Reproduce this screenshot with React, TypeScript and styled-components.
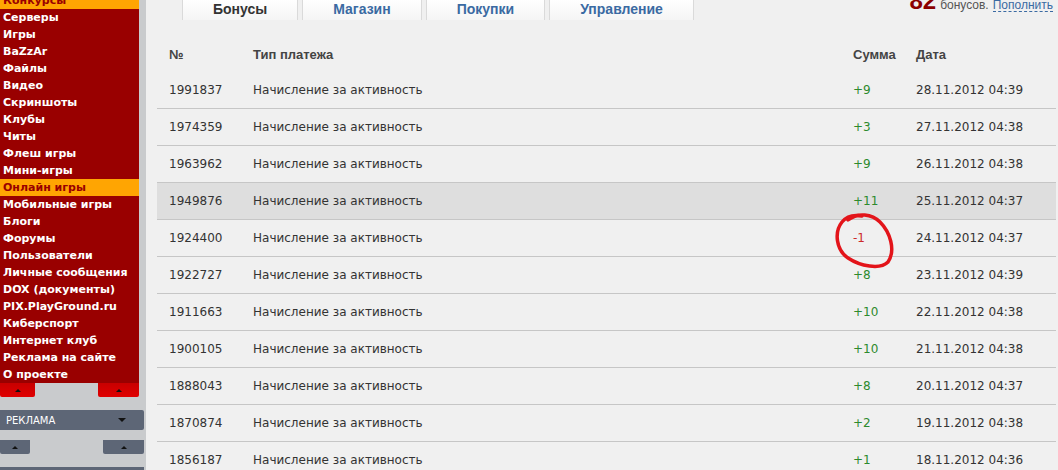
import styled, { createGlobalStyle } from "styled-components";

const Global = createGlobalStyle`
    html, body {
        margin: 0;
        padding: 0;
        background: #f0f0f0;
        overflow: hidden;
    }
`;

const Page = styled.div`
    display: flex;
    width: 1058px;
    height: 470px;
    overflow: hidden;
`;

const Sidebar = styled.aside`
    width: 146px;
    flex: none;
    background: #c9cbcd;
    display: flex;
    flex-direction: column;
    > * {
        flex: none;
    }
`;

const Menu = styled.ul`
    list-style: none;
    margin: -8px 0 0;
    padding: 0;
    width: 139px;
    background: #990000;
`;

const MenuItem = styled.li<{ $act?: boolean }>`
    height: 17px;
    line-height: 17px;
    padding-left: 3px;
    font-family: "DejaVu Sans", Verdana, sans-serif;
    font-size: 11px;
    font-weight: bold;
    white-space: nowrap;
    color: ${p => p.$act ? "#990000" : "#fff"};
    background: ${p => p.$act ? "#ffa502" : "transparent"};
`;

const ArrowRow = styled.div`
    display: flex;
    justify-content: space-between;
    width: 139px;
    height: 14px;
`;

const RedTab = styled.div<{ $w: number }>`
    width: ${p => p.$w}px;
    height: 100%;
    background: linear-gradient(#c80000, #e00000);
    border-radius: 0 0 2px 2px;
    display: flex;
    align-items: center;
    justify-content: center;
`;

const Up = styled.span`
    width: 0;
    height: 0;
    border-left: 3px solid transparent;
    border-right: 3px solid transparent;
    border-bottom: 3px solid #111;
`;

const Down = styled.span`
    width: 0;
    height: 0;
    border-left: 4px solid transparent;
    border-right: 4px solid transparent;
    border-top: 4px solid #111;
`;

const AdBar = styled.div`
    margin-top: 13px;
    width: 144px;
    height: 20px;
    background: #5d6676;
    border-radius: 0 2px 2px 0;
    display: flex;
    align-items: center;
    justify-content: space-between;
    padding: 0 18px 0 6px;
    box-sizing: border-box;
    font-family: "DejaVu Sans", Verdana, sans-serif;
    font-size: 10px;
    color: #fff;
`;

const SlateRow = styled.div`
    margin-top: 10px;
    width: 144px;
    height: 14px;
    display: flex;
    justify-content: space-between;
`;

const SlateTab = styled.div<{ $w: number }>`
    width: ${p => p.$w}px;
    height: 100%;
    background: #5d6676;
    border-radius: 0 0 2px 2px;
    display: flex;
    align-items: center;
    justify-content: center;
`;

const NextBar = styled.div`
    margin-top: 13px;
    width: 144px;
    height: 20px;
    background: #5d6676;
`;

const Content = styled.main`
    flex: 1;
    padding-left: 11px;
    display: flex;
    flex-direction: column;
`;

const TopBar = styled.div`
    display: flex;
    justify-content: space-between;
    align-items: flex-start;
    height: 20px;
    padding: 0 5px 0 25px;
`;

const Tabs = styled.nav`
    display: flex;
    gap: 4px;
`;

const Tab = styled.div<{ $act?: boolean }>`
    height: 20px;
    padding: 0 30px;
    border: 1px solid #dadada;
    border-top: none;
    border-bottom: none;
    background: linear-gradient(#ffffff, #f5f5f5);
    font-family: "Liberation Sans", Arial, sans-serif;
    font-size: 14px;
    font-weight: bold;
    line-height: 18px;
    color: ${p => p.$act ? "#333" : "#3a6aa2"};
`;

const Balance = styled.div`
    display: flex;
    align-items: baseline;
    gap: 4px;
    margin-top: -11px;
    line-height: 1;
    font-family: "Liberation Sans", Arial, sans-serif;
    font-size: 12px;
    color: #555;
`;

const Amount = styled.b`
    font-size: 24px;
    color: #8b0000;
`;

const Refill = styled.span`
    color: #3a6aa2;
    border-bottom: 1px dashed #3a6aa2;
`;

const Table = styled.div`
    margin-top: 16px;
    width: 899px;
    font-family: "DejaVu Sans", Verdana, sans-serif;
    font-size: 12px;
    color: #333;
`;

const Row = styled.div<{ $head?: boolean; $hover?: boolean }>`
    display: grid;
    grid-template-columns: 96px 600px 63px 140px;
    height: 36px;
    border-bottom: ${p => p.$head ? "none" : "1px solid #c6c6c6"};
    background: ${p => p.$hover ? "#dedede" : "transparent"};
    ${p => p.$head && `
        font-family: "Liberation Sans", Arial, sans-serif;
        font-size: 13px;
        font-weight: bold;
        color: #444;
    `}
`;

const Cell = styled.div`
    display: flex;
    align-items: center;
    position: relative;
    white-space: nowrap;
    &:first-child {
        padding-left: 12px;
    }
`;

const Sum = styled(Cell)<{ $neg?: boolean }>`
    color: ${p => p.$neg ? "#cc2a2a" : "#2d8a2d"};
`;

const Scribble = styled.svg`
    position: absolute;
    left: -23px;
    top: -12px;
    overflow: visible;
`;

const menu = [
    "Конкурсы", "Серверы", "Игры", "BaZzAr", "Файлы", "Видео", "Скриншоты", "Клубы",
    "Читы", "Флеш игры", "Мини-игры", "Онлайн игры", "Мобильные игры", "Блоги", "Форумы",
    "Пользователи", "Личные сообщения", "DOX (документы)", "PIX.PlayGround.ru", "Киберспорт",
    "Интернет клуб", "Реклама на сайте", "О проекте",
];
const active = ["Конкурсы", "Онлайн игры"];

const rows = [
    ["1991837", "+9", "28.11.2012 04:39"],
    ["1974359", "+3", "27.11.2012 04:38"],
    ["1963962", "+9", "26.11.2012 04:38"],
    ["1949876", "+11", "25.11.2012 04:37"],
    ["1924400", "-1", "24.11.2012 04:37"],
    ["1922727", "+8", "23.11.2012 04:39"],
    ["1911663", "+10", "22.11.2012 04:38"],
    ["1900105", "+10", "21.11.2012 04:38"],
    ["1888043", "+8", "20.11.2012 04:37"],
    ["1870874", "+2", "19.11.2012 04:38"],
    ["1856187", "+1", "18.11.2012 04:36"],
];

export default function App() {
    return (
        <>
            <Global />
            <Page>
                <Sidebar>
                    <Menu>
                        {menu.map(m => (
                            <MenuItem key={m} $act={active.includes(m)}>{m}</MenuItem>
                        ))}
                    </Menu>
                    <ArrowRow>
                        <RedTab $w={35}><Up /></RedTab>
                        <RedTab $w={41}><Up /></RedTab>
                    </ArrowRow>
                    <AdBar>
                        <span>РЕКЛАМА</span>
                        <Down />
                    </AdBar>
                    <SlateRow>
                        <SlateTab $w={30}><Up /></SlateTab>
                        <SlateTab $w={41}><Up /></SlateTab>
                    </SlateRow>
                    <NextBar />
                </Sidebar>

                <Content>
                    <TopBar>
                        <Tabs>
                            <Tab $act>Бонусы</Tab>
                            <Tab>Магазин</Tab>
                            <Tab>Покупки</Tab>
                            <Tab>Управление</Tab>
                        </Tabs>
                        <Balance>
                            <Amount>82</Amount>
                            <span>бонусов.</span>
                            <Refill>Пополнить</Refill>
                        </Balance>
                    </TopBar>

                    <Table>
                        <Row $head>
                            <Cell>№</Cell>
                            <Cell>Тип платежа</Cell>
                            <Cell>Сумма</Cell>
                            <Cell>Дата</Cell>
                        </Row>
                        {rows.map(([id, sum, date]) => (
                            <Row key={id} $hover={id === "1949876"}>
                                <Cell>{id}</Cell>
                                <Cell>Начисление за активность</Cell>
                                <Sum $neg={sum.startsWith("-")}>
                                    {sum}
                                    {sum.startsWith("-") && (
                                        <Scribble width="70" height="64" viewBox="0 0 70 64">
                                            <path
                                                d="M18 12 C28 4, 42 6, 50 14 C60 24, 66 42, 58 54 C50 62, 30 58, 18 50 C6 42, 4 24, 12 14 C16 9, 22 6, 32 8"
                                                fill="none"
                                                stroke="#e3141a"
                                                strokeWidth="3.5"
                                                strokeLinecap="round"
                                                strokeLinejoin="round"
                                            />
                                        </Scribble>
                                    )}
                                </Sum>
                                <Cell>{date}</Cell>
                            </Row>
                        ))}
                    </Table>
                </Content>
            </Page>
        </>
    );
}
